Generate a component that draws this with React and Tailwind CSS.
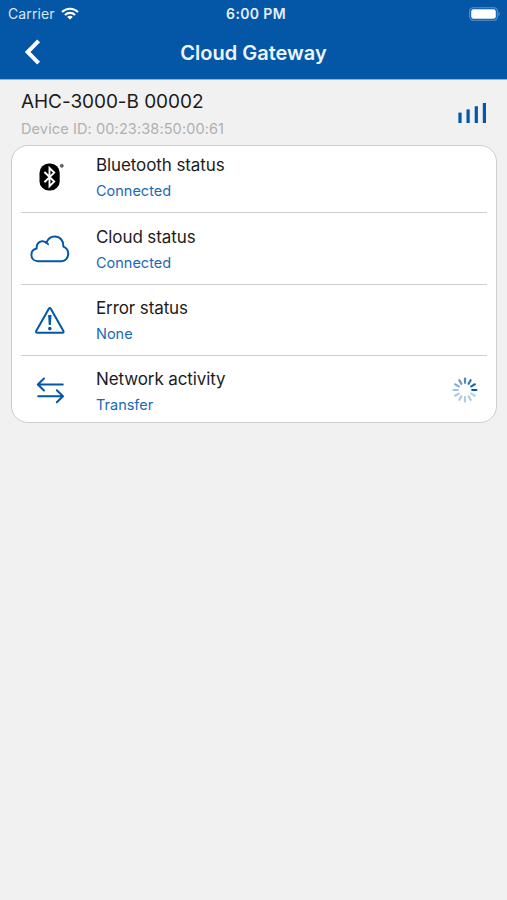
import React from 'react';

const BluetoothIcon = () => (
  <svg width="44" height="30" viewBox="0 0 44 30" fill="none">
    <rect x="11.5" y="0.6" width="20.2" height="27" rx="9.4" fill="#000" />
    <path d="M16.4 9 L26.2 18.6 L21.5 23.2 V5 L26.2 9.6 L16.4 19.2" stroke="#fff" strokeWidth="1.9" />
    <circle cx="33.8" cy="2.8" r="1.5" fill="#777" stroke="#444" strokeWidth="0.8" />
  </svg>
);

const CloudIcon = () => (
  <svg width="44" height="30" viewBox="0 0 44 30" fill="none">
    <path
      d="M10.2 27.2 C6 27.2 3.4 24.4 3.4 20.9 C3.4 17.7 5.6 15.2 8.6 14.6 C8.3 10.2 10.7 7.4 14 7.2 C15.8 7.1 17.2 7.7 18.3 8.8 C19.8 4.8 22.8 2.4 26.7 2.4 C32 2.4 35.6 6.6 35.3 12.6 C38.3 13.6 40.2 16.2 40.2 19.7 C40.2 24.1 37.4 27.2 33.6 27.2 Z"
      stroke="#0457a6"
      strokeWidth="2"
      strokeLinejoin="round"
    />
    <path d="M18.3 8.8 C19.2 9.2 19.7 9.6 20.2 10.3" stroke="#0457a6" strokeWidth="1.7" strokeLinecap="round" />
  </svg>
);

const WarningIcon = () => (
  <svg width="44" height="30" viewBox="0 0 44 30" fill="none">
    <path
      d="M20.8 2.8 Q21.8 1.4 22.8 2.8 L35.4 24.9 Q36 26.7 34.4 26.7 H9.2 Q7.6 26.7 8.2 24.9 Z"
      stroke="#0457a6"
      strokeWidth="2"
      strokeLinejoin="round"
    />
    <path d="M20.1 8.9 H23.5 L22.8 19.1 H20.8 Z" fill="#0457a6" />
    <circle cx="21.8" cy="22.6" r="1.8" fill="#0457a6" />
  </svg>
);

const TransferIcon = () => (
  <svg width="44" height="30" viewBox="0 0 44 30" fill="none" stroke="#0457a6" strokeWidth="2" strokeLinecap="round" strokeLinejoin="round">
    <path d="M34.8 7.5 H10.2 M16 1.5 L9.8 7.5 L16 13.5" />
    <path d="M10.2 19.3 H34.8 M28.8 13.3 L35 19.3 L28.8 25.3" />
  </svg>
);

const SignalIcon = () => (
  <svg width="30" height="20" viewBox="0 0 30 20" fill="#0457a6">
    <rect x="1.4" y="9.6" width="3.2" height="10.4" />
    <rect x="9.5" y="6.4" width="3.2" height="13.6" />
    <rect x="17.7" y="3.2" width="3.2" height="16.8" />
    <rect x="25.8" y="0" width="3.2" height="20" />
  </svg>
);

const Spinner = () => {
  // Opacity of every spoke, counterclockwise from 3 o'clock
  const spokes = [1, 0.9, 0.8, 0.7, 0.6, 0.48, 0.36, 0.32, 0.3, 0.3, 0.3, 0.28];

  return (
    <svg width="26" height="26" viewBox="-13 -13 26 26">
      {spokes.map((opacity, i) => (
        <line
          key={i}
          x1="7.2"
          x2="11.4"
          y1="0"
          y2="0"
          stroke="#0457a6"
          strokeWidth="2.2"
          strokeLinecap="round"
          opacity={opacity}
          transform={`rotate(${-30 * i})`}
        />
      ))}
    </svg>
  );
};

const filas = [
  { title: 'Bluetooth status', value: 'Connected', icon: <BluetoothIcon /> },
  { title: 'Cloud status', value: 'Connected', icon: <CloudIcon /> },
  { title: 'Error status', value: 'None', icon: <WarningIcon /> },
  { title: 'Network activity', value: 'Transfer', icon: <TransferIcon />, loading: true },
];

const StatusBar = () => (
  <div className="grid h-[27px] grid-cols-3 items-center pl-[8px] pr-[6px] text-white">
    <div className="flex items-center gap-[6px]">
      <span className="pb-px text-[14px] tracking-[0.1px] text-[#d6e6f5]">Carrier</span>
      <svg width="18" height="13" viewBox="0 0 18 13" fill="none" stroke="#fff" strokeWidth="2.1">
        <path d="M1 4.9 C5.5 0.6 12.5 0.6 17 4.9" />
        <path d="M3.9 7.9 C6.8 5.2 11.2 5.2 14.1 7.9" />
        <path d="M9 12.6 L6.2 9.9 C7.8 8.5 10.2 8.5 11.8 9.9 Z" fill="#fff" stroke="none" />
      </svg>
    </div>
    <span className="pb-px pl-[3px] text-center text-[14px] font-semibold tracking-[0.35px] text-[#e6f0fa]">6:00 PM</span>
    <svg className="justify-self-end" width="32" height="14" viewBox="0 0 32 14">
      <rect x="0.7" y="0.7" width="27.6" height="12.6" rx="3.6" fill="none" stroke="#5d94c9" strokeWidth="1.1" />
      <rect x="2.2" y="2.2" width="24.6" height="9.6" rx="2.2" fill="#fff" />
      <path d="M29.6 4.8 Q31.6 7 29.6 9.2 Z" fill="#7aa8d4" />
    </svg>
  </div>
);

const App = () => {
  return (
    <div className="flex min-h-screen w-full flex-col bg-[#f1f1f1] font-['Inter','Liberation_Sans',sans-serif]">
      <header className="h-[80px] border-b border-[#8db6da] bg-[#0457a6]">
        <StatusBar />
        <div className="grid h-[51px] grid-cols-[60px_1fr_60px] items-center">
          <svg className="mb-[2px] ml-[24px]" width="18" height="26" viewBox="0 0 18 26" fill="none">
            <path d="M14.6 1.8 L3.6 13 L14.6 24.2" stroke="#fff" strokeWidth="4" />
          </svg>
          <h1 className="text-center text-[20px] font-semibold text-[#eef5fc]">Cloud Gateway</h1>
        </div>
      </header>

      {/* Device */}
      <section className="flex h-[65px] items-start justify-between pl-[21px] pr-[20px] pt-[9px]">
        <div>
          <p className="pt-px text-[19px] leading-[24px] tracking-[-0.06px] text-[#1c1c1c]">AHC-3000-B 00002</p>
          <p className="mt-[5px] text-[14.5px] leading-[19px] tracking-[0.12px] text-[#b0b0b0]">Device ID: 00:23:38:50:00:61</p>
        </div>
        <div className="mt-[14px]">
          <SignalIcon />
        </div>
      </section>

      {/* Status list */}
      <ul className="mr-[10px] ml-[11px] h-[278px] rounded-[17px] border-[1.5px] border-[#cdcdcd] bg-white px-[9px]">
        {filas.map((fila) => (
          <li
            key={fila.title}
            className="flex h-[71.4px] items-start border-b-[1.5px] border-[#cecece] first:h-[67.4px] last:h-[67px] last:border-b-0 [&:not(:first-child)]:pt-[4px]"
          >
            <div className="mt-[17px] ml-[7px] w-[68px]">{fila.icon}</div>
            <div className="flex-1 pt-[8.2px]">
              <p className="text-[17px] leading-[22px] tracking-[-0.1px] text-[#1c1c1c]">{fila.title}</p>
              <p className="mt-[6px] text-[14.5px] leading-[18px] text-[#1b69b4]">{fila.value}</p>
            </div>
            {fila.loading && (
              <div className="mt-[17px] mr-[9px]">
                <Spinner />
              </div>
            )}
          </li>
        ))}
      </ul>
    </div>
  );
};

export default App;
